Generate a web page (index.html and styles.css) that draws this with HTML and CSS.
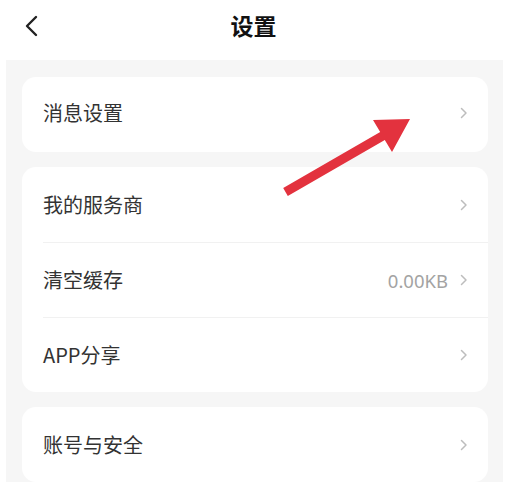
FILE: index.html
```html
<!DOCTYPE html>
<html lang="zh-CN">
<head>
<meta charset="utf-8">
<title>设置</title>
<link rel="stylesheet" href="styles.css">
</head>
<body>
<div class="page">
  <header class="topbar">
    <span class="back">
      <svg width="16" height="24" viewBox="0 0 16 24"><polyline points="12,3 3,12 12,21" fill="none" stroke="#222" stroke-width="2.4" stroke-linecap="round" stroke-linejoin="round"/></svg>
    </span>
    <h1 class="title">设置</h1>
  </header>
  <main class="content">
    <section class="card">
      <div class="row"><span class="label">消息设置</span><span class="right"><svg class="chev" width="8" height="12" viewBox="0 0 8 12"><polyline points="1.5,1.5 6,6 1.5,10.5" fill="none" stroke="#bdbdbd" stroke-width="1.5" stroke-linecap="round" stroke-linejoin="round"/></svg></span></div>
    </section>
    <section class="card">
      <div class="row"><span class="label">我的服务商</span><span class="right"><svg class="chev" width="8" height="12" viewBox="0 0 8 12"><polyline points="1.5,1.5 6,6 1.5,10.5" fill="none" stroke="#bdbdbd" stroke-width="1.5" stroke-linecap="round" stroke-linejoin="round"/></svg></span></div>
      <div class="row"><span class="label">清空缓存</span><span class="right"><span class="value">0.00KB</span><svg class="chev" width="8" height="12" viewBox="0 0 8 12"><polyline points="1.5,1.5 6,6 1.5,10.5" fill="none" stroke="#bdbdbd" stroke-width="1.5" stroke-linecap="round" stroke-linejoin="round"/></svg></span></div>
      <div class="row"><span class="label">APP分享</span><span class="right"><svg class="chev" width="8" height="12" viewBox="0 0 8 12"><polyline points="1.5,1.5 6,6 1.5,10.5" fill="none" stroke="#bdbdbd" stroke-width="1.5" stroke-linecap="round" stroke-linejoin="round"/></svg></span></div>
    </section>
    <section class="card">
      <div class="row"><span class="label">账号与安全</span><span class="right"><svg class="chev" width="8" height="12" viewBox="0 0 8 12"><polyline points="1.5,1.5 6,6 1.5,10.5" fill="none" stroke="#bdbdbd" stroke-width="1.5" stroke-linecap="round" stroke-linejoin="round"/></svg></span></div>
    </section>
  </main>
  <svg class="arrow" width="507" height="482" viewBox="0 0 507 482"><polygon points="283.2,188.1 380.2,132.1 373,120 410,119 392,152 384.8,139.9 287.8,195.9" fill="#e3323e"/></svg>
</div>
</body>
</html>
```

FILE: styles.css
```css
* { box-sizing: border-box; }
html, body { margin: 0; padding: 0; background: #ffffff; }
body {
  font-family: "Noto Sans CJK SC", "Noto Sans", sans-serif;
  color: #333333;
  overflow: hidden;
}
.page {
  position: relative;
  width: 507px;
  height: 482px;
  overflow: hidden;
}
.topbar {
  height: 60px;
  display: flex;
  align-items: center;
  justify-content: center;
  position: relative;
}
.back {
  position: absolute;
  left: 24px;
  top: 14px;
  display: flex;
}
.title {
  margin: 0;
  font-size: 23px;
  font-weight: 700;
  color: #111111;
  letter-spacing: 0;
  line-height: 1;
  margin-top: -10px;
}
.content {
  margin: 0 4px 0 6px;
  background: #f6f6f6;
  padding: 17px 15px 0 16px;
  display: flex;
  flex-direction: column;
  gap: 15px;
  height: 422px;
}
.card {
  background: #ffffff;
  border-radius: 14px;
  padding-left: 21px;
  flex-shrink: 0;
}
.row {
  height: 75px;
  display: flex;
  align-items: center;
  justify-content: space-between;
  padding-right: 20px;
  border-top: 1px solid #f1f1f1;
}
.card:first-child .row { padding-bottom: 3px; }
.row:first-child { border-top: none; }
.label {
  font-size: 20px;
  color: #333333;
  line-height: 1;
}
.right {
  display: flex;
  align-items: center;
  gap: 12px;
}
.value {
  font-size: 18.5px;
  color: #a3a3a3;
  font-family: "Noto Sans", "Noto Sans CJK SC", sans-serif;
}
.chev { display: block; }
.arrow {
  position: absolute;
  left: 0;
  top: 0;
  pointer-events: none;
}
```
